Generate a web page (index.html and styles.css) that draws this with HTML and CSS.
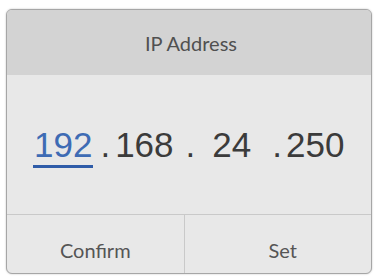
FILE: index.html
```html
<!DOCTYPE html>
<html>
<head>
<meta charset="utf-8">
<link rel="stylesheet" href="styles.css">
</head>
<body>
<div class="panel">
  <div class="header">IP Address</div>
  <div class="body">
    <div class="ip">
      <span class="seg active">192</span>
      <span class="dot d1">.</span>
      <span class="seg">168</span>
      <span class="dot d2">.</span>
      <span class="seg">24</span>
      <span class="dot d3">.</span>
      <span class="seg">250</span>
    </div>
  </div>
  <div class="buttons">
    <div class="btn">Confirm</div>
    <div class="btn right">Set</div>
  </div>
</div>
</body>
</html>
```
FILE: styles.css
```css
html, body {
  margin: 0;
  padding: 0;
  background: #ffffff;
}
body {
  width: 376px;
  height: 276px;
  overflow: hidden;
  padding-top: 9px;
  padding-left: 6px;
  box-sizing: border-box;
}
.panel {
  width: 366px;
  height: 265px;
  box-sizing: border-box;
  border: 1px solid #a6a6a6;
  border-radius: 6px;
  box-shadow: 0 0 2px rgba(0,0,0,0.25);
  overflow: hidden;
  display: flex;
  flex-direction: column;
  background: #e8e8e8;
}
.header {
  height: 65px;
  flex: none;
  background: #d3d3d3;
  color: #505050;
  font-family: Lato, "Liberation Sans", sans-serif;
  font-size: 20px;
  display: flex;
  align-items: center;
  justify-content: center;
  padding-left: 4px;
  padding-top: 1px;
  box-sizing: border-box;
}
.body {
  height: 139px;
  flex: none;
  border-bottom: 1px solid #c9c9c9;
  display: flex;
  align-items: center;
  background: #e8e8e8;
}
.ip {
  display: flex;
  align-items: baseline;
  padding-left: 26px;
  padding-top: 6px;
  font-family: "Liberation Sans", Arial, sans-serif;
  font-size: 35px;
  line-height: 35px;
  color: #3b3b3b;
}
.seg {
  display: inline-block;
}
.seg.active {
  color: #3e6bb4;
  border-bottom: 3px solid #2f5ca8;
  padding-bottom: 3px;
  padding-left: 1px;
  padding-right: 1px;
}
.dot.d1 { margin-left: 7px; margin-right: 5px; }
.dot.d2 { margin-left: 12px; margin-right: 17px; }
.dot.d3 { margin-left: 21px; margin-right: 4px; }
.buttons {
  flex: 1;
  display: flex;
}
.btn {
  flex: 1;
  display: flex;
  align-items: center;
  justify-content: center;
  padding-top: 11px;
  box-sizing: border-box;
  font-family: Lato, "Liberation Sans", sans-serif;
  font-size: 20px;
  color: #555555;
}
.btn.right {
  border-left: 1px solid #c9c9c9;
  padding-left: 10px;
}
```
